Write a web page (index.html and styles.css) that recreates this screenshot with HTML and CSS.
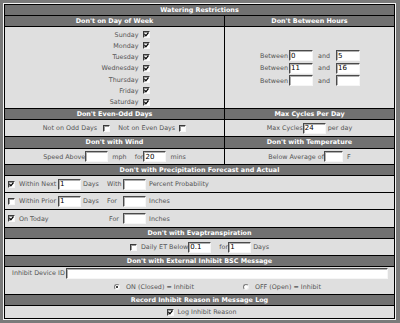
FILE: index.html
```html
<!DOCTYPE html>
<html lang="en">
<head>
    <meta charset="UTF-8">
    <title>Watering Restrictions</title>
    <link rel="stylesheet" href="styles.css">
</head>
<body>

    <div class="frame">
        <div class="sheet">

            <div class="hdr full">Watering Restrictions</div>

            <div class="hdr">Don't on Day of Week</div>
            <div class="hdr">Don't Between Hours</div>

            <div class="cell days">
                <div class="day_list">
                    <span>Sunday</span><span class="cb on"><svg viewBox="0 0 5 5"><path d="M0.6 2.2 L1.9 3.8 L4.4 0.6"/></svg></span>
                    <span>Monday</span><span class="cb on"><svg viewBox="0 0 5 5"><path d="M0.6 2.2 L1.9 3.8 L4.4 0.6"/></svg></span>
                    <span>Tuesday</span><span class="cb on"><svg viewBox="0 0 5 5"><path d="M0.6 2.2 L1.9 3.8 L4.4 0.6"/></svg></span>
                    <span>Wednesday</span><span class="cb on"><svg viewBox="0 0 5 5"><path d="M0.6 2.2 L1.9 3.8 L4.4 0.6"/></svg></span>
                    <span>Thursday</span><span class="cb on"><svg viewBox="0 0 5 5"><path d="M0.6 2.2 L1.9 3.8 L4.4 0.6"/></svg></span>
                    <span>Friday</span><span class="cb on"><svg viewBox="0 0 5 5"><path d="M0.6 2.2 L1.9 3.8 L4.4 0.6"/></svg></span>
                    <span>Saturday</span><span class="cb on"><svg viewBox="0 0 5 5"><path d="M0.6 2.2 L1.9 3.8 L4.4 0.6"/></svg></span>
                </div>
            </div>

            <div class="cell hours_cell">
                <div class="hours">
                    <span>Between</span><input type="text" value="0"><span>and</span><input type="text" value="5">
                    <span>Between</span><input type="text" value="11"><span>and</span><input type="text" value="16">
                    <span>Between</span><input type="text" value=""><span>and</span><input type="text" value="">
                </div>
            </div>

            <div class="hdr">Don't Even-Odd Days</div>
            <div class="hdr">Max Cycles Per Day</div>

            <div class="cell line">
                <span>Not on Odd Days</span><span class="cb gap_l"></span>
                <span class="gap_xl">Not on Even Days</span><span class="cb gap_m"></span>
            </div>
            <div class="cell line">
                <span>Max Cycles</span><input type="text" class="gap_m" value="24"><span class="gap_s">per day</span>
            </div>

            <div class="hdr">Don't with Wind</div>
            <div class="hdr">Don't with Temperature</div>

            <div class="cell line">
                <span>Speed Above</span><input type="text" class="gap_s" value="">
                <span class="gap_m">mph</span><span class="gap_xl">for</span>
                <input type="text" class="gap_s" value="20"><span class="gap_m">mins</span>
            </div>
            <div class="cell line">
                <span>Below Average of</span><input type="text" class="narrow gap_s" value=""><span class="gap_m">F</span>
            </div>

            <div class="hdr full">Don't with Precipitation Forecast and Actual</div>

            <div class="cell full precip">
                <span class="cb on"><svg viewBox="0 0 5 5"><path d="M0.6 2.2 L1.9 3.8 L4.4 0.6"/></svg></span>
                <span>Within Next</span><input type="text" value="1">
                <span>Days</span><span>With</span><input type="text" value="">
                <span>Percent Probability</span>
            </div>
            <div class="cell full precip">
                <span class="cb"></span>
                <span>Within Prior</span><input type="text" value="1">
                <span>Days</span><span>For</span><input type="text" value="">
                <span>Inches</span>
            </div>
            <div class="cell full precip">
                <span class="cb on"><svg viewBox="0 0 5 5"><path d="M0.6 2.2 L1.9 3.8 L4.4 0.6"/></svg></span>
                <span class="span3">On Today</span>
                <span class="shift">For</span><input type="text" value="">
                <span>Inches</span>
            </div>

            <div class="hdr full">Don't with Evaptranspiration</div>

            <div class="cell full line">
                <span class="cb"></span><span class="gap_m">Daily ET Below</span>
                <input type="text" class="gap_l" value="0.1"><span class="gap_xl">for</span>
                <input type="text" class="gap_s" value="1"><span class="gap_s">Days</span>
            </div>

            <div class="hdr full">Don't with External Inhibit BSC Message</div>

            <div class="cell full device">
                <div class="device_row">
                    <span>Inhibit Device ID</span><input type="text" class="wide" value="">
                </div>
                <div class="radio_row">
                    <span class="rb on"></span><span class="gap_l">ON (Closed) = Inhibit</span>
                    <span class="rb radio_gap"></span><span class="gap_l">OFF (Open) = Inhibit</span>
                </div>
            </div>

            <div class="hdr full">Record Inhibit Reason in Message Log</div>

            <div class="cell full line log">
                <span class="cb on"><svg viewBox="0 0 5 5"><path d="M0.6 2.2 L1.9 3.8 L4.4 0.6"/></svg></span><span class="gap_m">Log Inhibit Reason</span>
            </div>

        </div>
    </div>

</body>
</html>
```

FILE: styles.css
```css
html, body {
    margin: 0;
    height: 323px;
    overflow: hidden;
    background: #7a7a7a;
}

body {
    font-family: 'DejaVu Sans', Verdana, sans-serif;
    font-size: 6.4px;
    color: #555;
}

.frame {
    margin: 3px 4px 3px 3px;
    border: 1px solid #f4f4f4;
}

.sheet {
    display: grid;
    grid-template-columns: 219px 169px;
    grid-template-rows: 10px 10px 81px 10px 16px 11px 15px 10px 16px 16px 17px 10px 16px 10px 27px 10px 12px;
    gap: 1px;
    padding: 1px;
    background: #000;
}

.full {
    grid-column: 1 / 3;
}

.hdr {
    background: #717171;
    color: #fff;
    font-weight: bold;
    display: flex;
    align-items: center;
    justify-content: center;
    line-height: 1;
}

.cell {
    background: #dfdfdf;
}

/* checkbox / radio / field look of the old forms */
.cb {
    display: inline-block;
    box-sizing: border-box;
    width: 7px;
    height: 7px;
    background: #fff;
    border-top: 1px solid #3a3a3a;
    border-left: 1px solid #3a3a3a;
    border-right: 1px solid #f8f8f8;
    border-bottom: 1px solid #f8f8f8;
    box-shadow: inset 1px 1px 0 #9a9a9a;
}

.cb svg {
    display: block;
    width: 5px;
    height: 5px;
}

.cb path {
    fill: none;
    stroke: #000;
    stroke-width: 1.3;
}

.rb {
    display: inline-block;
    box-sizing: border-box;
    width: 6px;
    height: 6px;
    border-radius: 50%;
    background: #fff;
    border: 1px solid #7a7a7a;
    border-right-color: #f0f0f0;
    border-bottom-color: #f0f0f0;
    position: relative;
}

.rb.on::after {
    content: "";
    position: absolute;
    left: 1px;
    top: 1px;
    width: 2px;
    height: 2px;
    border-radius: 50%;
    background: #000;
}

input[type="text"] {
    box-sizing: border-box;
    width: 23px;
    height: 11px;
    margin: 0;
    padding: 0 1px;
    font-family: 'DejaVu Sans', Verdana, sans-serif;
    font-size: 7px;
    color: #000;
    background: #fff;
    border-top: 1px solid #4a4a4a;
    border-left: 1px solid #4a4a4a;
    border-right: 1px solid #f6f6f6;
    border-bottom: 1px solid #f6f6f6;
    box-shadow: inset 1px 1px 0 #b0b0b0;
    outline: none;
}

input.narrow {
    width: 19px;
}

input.wide {
    flex: 1;
    width: auto;
    margin-left: 1px;
    margin-right: 6px;
}

.gap_s { margin-left: 2px; }
.gap_m { margin-left: 4px; }
.gap_l { margin-left: 6px; }
.gap_xl { margin-left: 8px; }

.line {
    display: flex;
    align-items: center;
    justify-content: center;
}

/* day of week */
.days {
    display: flex;
    justify-content: center;
    padding-left: 22px;
}

.day_list {
    display: grid;
    grid-template-columns: auto 7px;
    grid-auto-rows: 11.25px;
    column-gap: 4px;
    align-items: center;
    justify-items: end;
    margin-top: 2px;
}

/* between hours */
.hours_cell {
    display: flex;
    align-items: center;
    justify-content: center;
}

.hours {
    display: grid;
    grid-template-columns: auto 24px auto 23px;
    grid-auto-rows: 12.5px;
    align-items: center;
    column-gap: 1px;
    margin-top: 1px;
}

.hours input[type="text"] {
    width: 24px;
}

.hours span:nth-child(4n+3) {
    margin: 0 5px 0 4px;
}

/* precipitation rows */
.precip {
    display: grid;
    grid-template-columns: 11px 39px 25px 24px 16px 26px auto;
    align-items: center;
    padding-left: 3px;
}

.span3 {
    grid-column: 2 / 5;
}

.shift {
    padding-left: 2px;
}

/* external inhibit */
.device {
    display: flex;
    flex-direction: column;
}

.device_row {
    display: flex;
    align-items: center;
    height: 12px;
    padding-left: 7px;
}

.radio_row {
    display: flex;
    align-items: center;
    justify-content: center;
    flex: 1;
    padding-left: 36px;
}

.radio_gap {
    margin-left: 49px;
}

.log {
    padding-left: 4px;
}
```
